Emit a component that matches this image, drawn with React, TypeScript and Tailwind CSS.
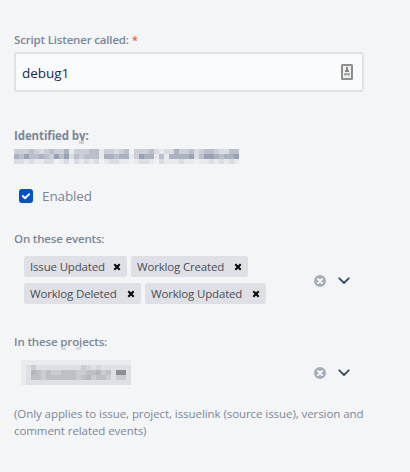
import React from 'react';

const tones: Record<string, string> = {
  '0': 'bg-[#f0f1f4]',
  '1': 'bg-[#e7e9ed]',
  '2': 'bg-[#d9dce3]',
  '3': 'bg-[#cccfd8]',
  '4': 'bg-[#bac0cb]',
  '5': 'bg-[#aab1c0]',
  '6': 'bg-[#99a2b4]',
  a: 'bg-[#eaebee]',
  b: 'bg-[#dfe0e5]',
  c: 'bg-[#d6d7db]',
  d: 'bg-[#cbccd0]',
  e: 'bg-[#bfc0c3]',
  f: 'bg-[#b5b6b9]',
  g: 'bg-[#8d8e93]',
};

const identifier = [
  '333432343351333441332340333421225334234432244',
  '546445436462434441554551365514155556246654556',
  '221211220120212120122110122102111211011212121',
];

const project = [
  'aaaaaaaaaaaaaaaaaaaaaa',
  'abdbbbbbbbbbdcbcbbbbbb',
  'abfededdeeeddeefdebggb',
  'abeedeeeeeedefdeedbddb',
  'abbbbbbbbbbbbbbbbbbbbb',
];

function Mosaic({ rows }: { rows: string[] }) {
  return (
    <div aria-hidden="true">
      {rows.map((row, y) => (
        <div key={y} className="flex h-[5px]">
          {row.split('').map((tone, x) => (
            <span key={x} className={`h-[5px] w-[5px] shrink-0 ${tones[tone]}`} />
          ))}
        </div>
      ))}
    </div>
  );
}

function Tag({ label, width }: { label: string; width: string }) {
  return (
    <div className={`flex h-[21px] shrink-0 items-center justify-between rounded-[2px] bg-[#dfe0e6] px-[6px] text-[#4b4e55] ${width}`}>
      <span className="text-[11.5px] leading-[21px] tracking-[-0.17px] whitespace-nowrap">{label}</span>
      <svg width="8" height="8" viewBox="0 0 8 8" className="shrink-0">
        <path d="M1.3 1.3 6.7 6.7M6.7 1.3 1.3 6.7" stroke="#050505" strokeWidth="2" />
      </svg>
    </div>
  );
}

function Controls() {
  return (
    <div className="flex items-center">
      <svg width="12" height="12" viewBox="0 0 12 12">
        <circle cx="6" cy="6" r="6" fill="#a5adba" />
        <path d="m4 4 4 4m0-4L4 8" stroke="#fff" strokeWidth="1.8" strokeLinecap="round" />
      </svg>
      <svg width="12" height="8" viewBox="0 0 12 8" className="ml-3">
        <path d="m1.3 1.4 4.7 4.6 4.7-4.6" fill="none" stroke="#42526e" strokeWidth="2" strokeLinecap="round" strokeLinejoin="round" />
      </svg>
    </div>
  );
}

export default function App() {
  return (
    <main className="flex h-[472px] w-[410px] flex-col items-start overflow-hidden bg-[#f4f5f7] pt-8 pl-[14px] font-['Open_Sans','Noto_Sans',sans-serif] text-[#7a869a]">
      <label className="h-4 text-[11.5px] leading-4 font-semibold tracking-[-0.17px] whitespace-nowrap">
        Script Listener called: <span className="text-[#ef6039]">*</span>
      </label>
      <div className="mt-1 flex h-10 w-[350px] items-center justify-between rounded-[3px] border-2 border-[#dfe1e6] bg-[#fafbfc] pr-[9px] pl-[6px] text-[#172b4d]">
        <span className="pt-[2px] text-[13.5px] leading-5 tracking-[-0.05px]">debug1</span>
        <svg width="12" height="16" viewBox="0 0 12 16">
          <rect x="1" y="1" width="10" height="14" rx=".5" fill="#eff0ef" stroke="#8d8f8e" strokeWidth="2" />
          <path d="M5 3h2v3h1v2H4V6h1z" fill="#858585" />
          <path d="M3 9h6v2H3z" fill="#a7aaa8" />
          <path d="M3 11h6v1H3z" fill="#d0d2d0" />
        </svg>
      </div>

      <div className="relative mt-9 h-[21px] text-[11.5px] leading-4 font-bold tracking-[-0.1px]">
        Identified by:
        <span className="absolute top-[13px] left-[65px] h-[3px] w-[5px] bg-[#ccd0d8]" />
      </div>
      <Mosaic rows={identifier} />

      <label className="mt-[22px] ml-[5px] flex h-5 items-center">
        <span className="flex h-[14px] w-[14px] items-center justify-center rounded-[3px] bg-[#0052cc]">
          <svg width="10" height="8" viewBox="0 0 10 8">
            <path d="m1.8 4 2.2 2.2 4.1-4" fill="none" stroke="#fff" strokeWidth="2" strokeLinecap="round" strokeLinejoin="round" />
          </svg>
        </span>
        <span className="ml-[9px] text-[13.5px] leading-5 tracking-[-0.12px]">Enabled</span>
      </label>

      <div className="mt-[25px] h-4 text-[11.5px] leading-4 font-semibold tracking-[-0.17px]">On these events:</div>
      <div className="mt-[9px] ml-[10px] flex h-12 w-[326px] items-center justify-between">
        <div className="flex flex-col gap-[6px]">
          <div className="flex gap-1">
            <Tag label="Issue Updated" width="w-[103px]" />
            <Tag label="Worklog Created" width="w-[117px]" />
          </div>
          <div className="flex gap-1">
            <Tag label="Worklog Deleted" width="w-[117px]" />
            <Tag label="Worklog Updated" width="w-[121px]" />
          </div>
        </div>
        <div className="pt-[2px]">
          <Controls />
        </div>
      </div>

      <div className="relative mt-[30px] h-4 text-[11.5px] leading-4 font-semibold tracking-[-0.13px]">
        In these projects:
        <span className="absolute top-[13px] left-[47px] h-[3px] w-[5px] bg-[#d5d8df]" />
        <span className="absolute top-[13px] left-[62px] h-[3px] w-[5px] bg-[#d5d8df]" />
      </div>
      <div className="mt-[10px] ml-[7px] flex h-[25px] w-[329px] items-center justify-between">
        <Mosaic rows={project} />
        <Controls />
      </div>
      <p className="mt-5 text-[11.5px] leading-[17px] tracking-[-0.07px] whitespace-nowrap">
        (Only applies to issue, project, issuelink (source issue), version and<br />
        comment related events)
      </p>
    </main>
  );
}
